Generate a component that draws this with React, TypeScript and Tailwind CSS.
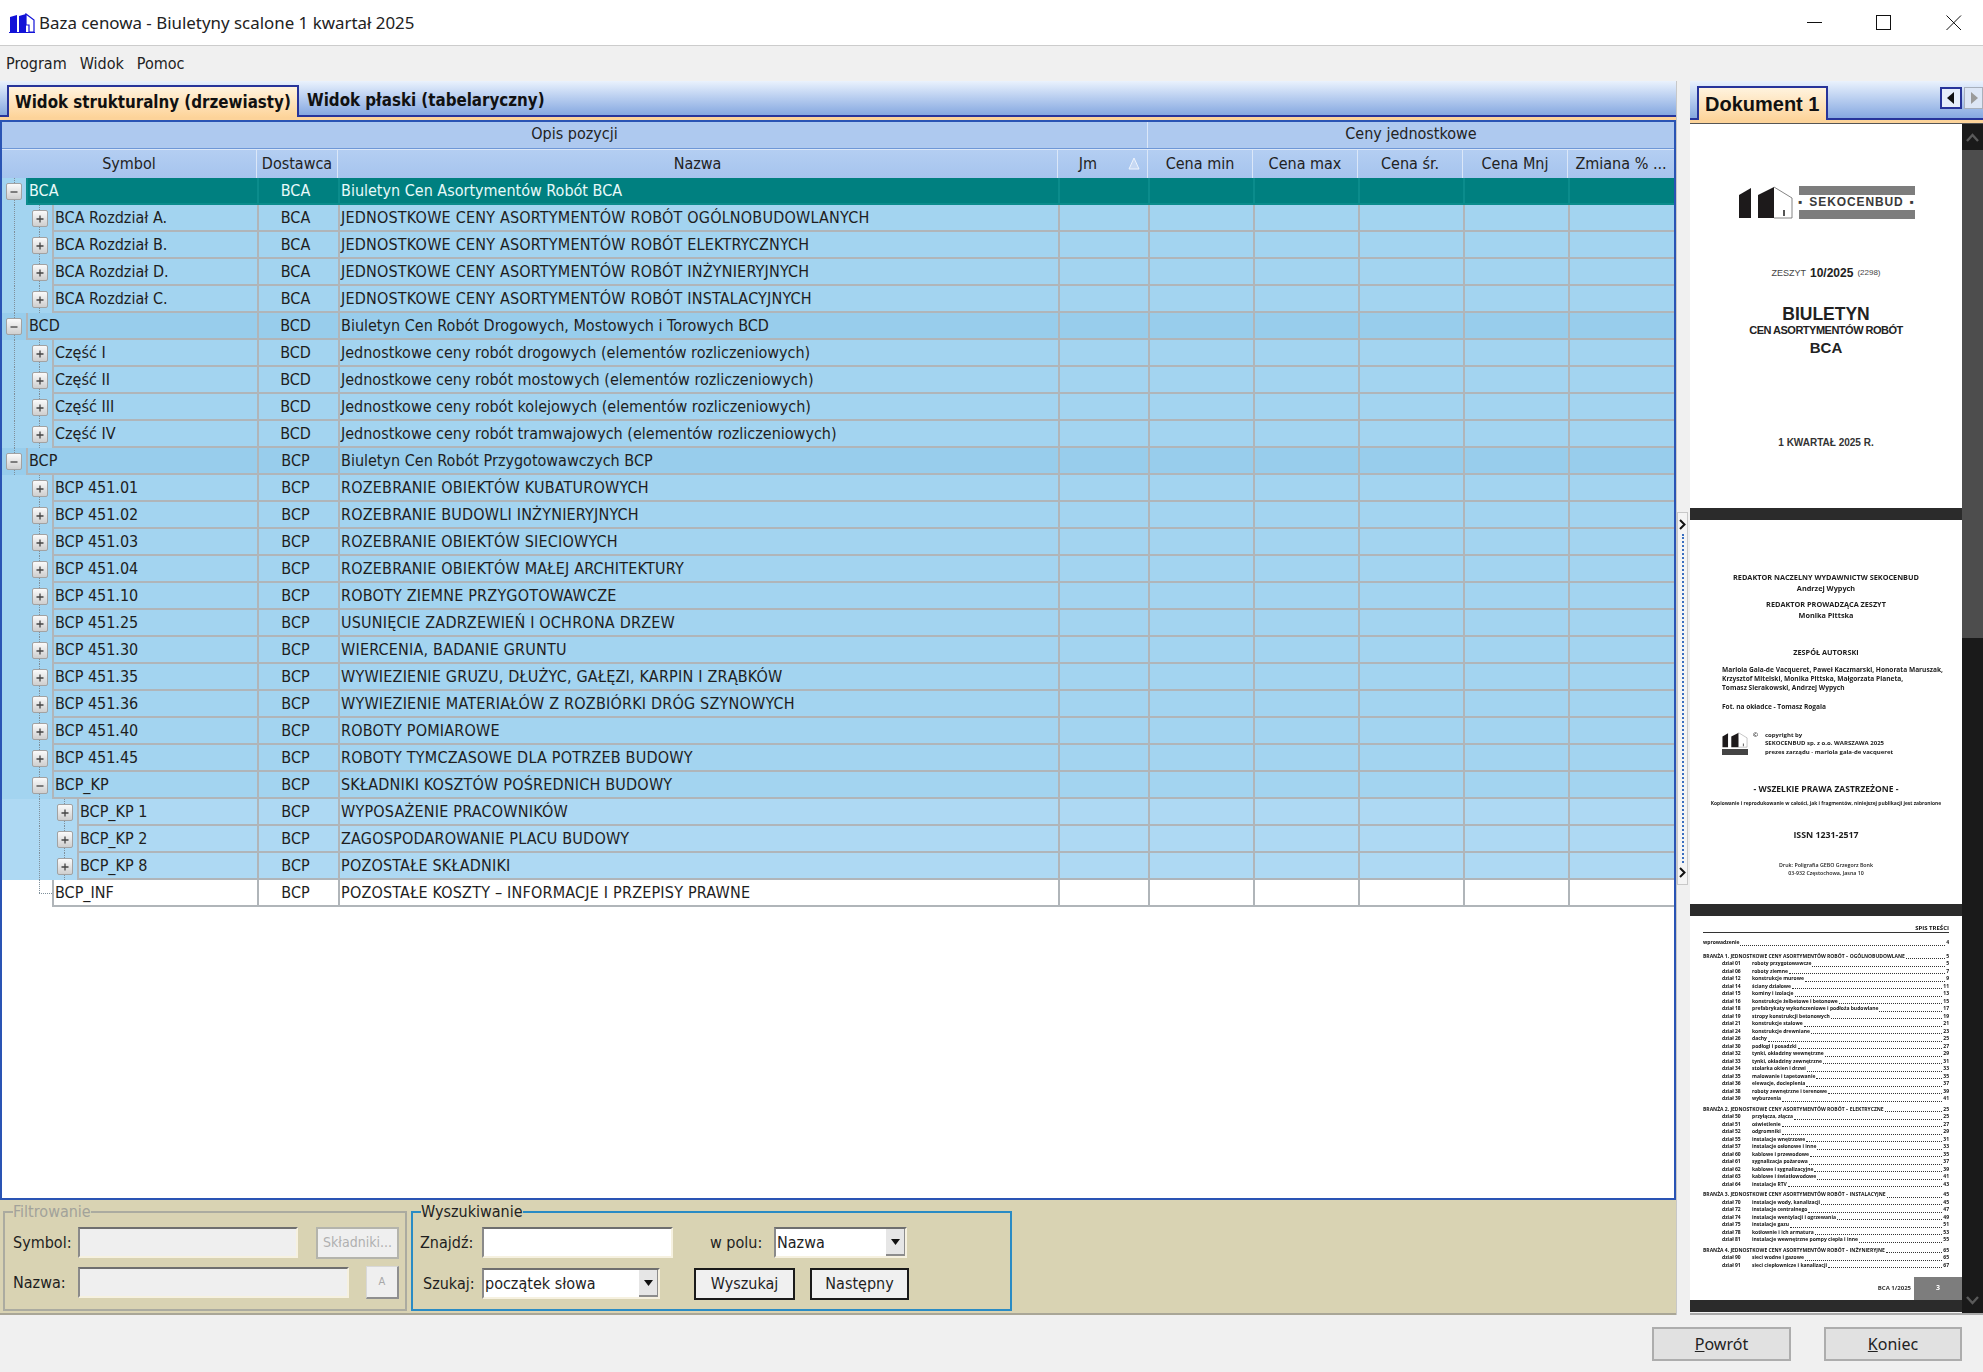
import React from "react";

type Row = { s: string; d: string; n: string; l: 0 | 1 | 2; box?: "plus" | "minus" };

const rows: Row[] = [
  { s: "BCA", d: "BCA", n: "Biuletyn Cen Asortymentów Robót BCA", l: 0, box: "minus" },
  { s: "BCA Rozdział A.", d: "BCA", n: "JEDNOSTKOWE CENY ASORTYMENTÓW ROBÓT OGÓLNOBUDOWLANYCH", l: 1, box: "plus" },
  { s: "BCA Rozdział B.", d: "BCA", n: "JEDNOSTKOWE CENY ASORTYMENTÓW ROBÓT ELEKTRYCZNYCH", l: 1, box: "plus" },
  { s: "BCA Rozdział D.", d: "BCA", n: "JEDNOSTKOWE CENY ASORTYMENTÓW ROBÓT INŻYNIERYJNYCH", l: 1, box: "plus" },
  { s: "BCA Rozdział C.", d: "BCA", n: "JEDNOSTKOWE CENY ASORTYMENTÓW ROBÓT INSTALACYJNYCH", l: 1, box: "plus" },
  { s: "BCD", d: "BCD", n: "Biuletyn Cen Robót Drogowych, Mostowych i Torowych BCD", l: 0, box: "minus" },
  { s: "Część I", d: "BCD", n: "Jednostkowe ceny robót drogowych (elementów rozliczeniowych)", l: 1, box: "plus" },
  { s: "Część II", d: "BCD", n: "Jednostkowe ceny robót mostowych (elementów rozliczeniowych)", l: 1, box: "plus" },
  { s: "Część III", d: "BCD", n: "Jednostkowe ceny robót kolejowych (elementów rozliczeniowych)", l: 1, box: "plus" },
  { s: "Część IV", d: "BCD", n: "Jednostkowe ceny robót tramwajowych (elementów rozliczeniowych)", l: 1, box: "plus" },
  { s: "BCP", d: "BCP", n: "Biuletyn Cen Robót Przygotowawczych BCP", l: 0, box: "minus" },
  { s: "BCP 451.01", d: "BCP", n: "ROZEBRANIE OBIEKTÓW KUBATUROWYCH", l: 1, box: "plus" },
  { s: "BCP 451.02", d: "BCP", n: "ROZEBRANIE BUDOWLI INŻYNIERYJNYCH", l: 1, box: "plus" },
  { s: "BCP 451.03", d: "BCP", n: "ROZEBRANIE OBIEKTÓW SIECIOWYCH", l: 1, box: "plus" },
  { s: "BCP 451.04", d: "BCP", n: "ROZEBRANIE OBIEKTÓW MAŁEJ ARCHITEKTURY", l: 1, box: "plus" },
  { s: "BCP 451.10", d: "BCP", n: "ROBOTY ZIEMNE PRZYGOTOWAWCZE", l: 1, box: "plus" },
  { s: "BCP 451.25", d: "BCP", n: "USUNIĘCIE ZADRZEWIEŃ I OCHRONA DRZEW", l: 1, box: "plus" },
  { s: "BCP 451.30", d: "BCP", n: "WIERCENIA, BADANIE GRUNTU", l: 1, box: "plus" },
  { s: "BCP 451.35", d: "BCP", n: "WYWIEZIENIE GRUZU, DŁUŻYC, GAŁĘZI, KARPIN I ZRĄBKÓW", l: 1, box: "plus" },
  { s: "BCP 451.36", d: "BCP", n: "WYWIEZIENIE MATERIAŁÓW Z ROZBIÓRKI DRÓG SZYNOWYCH", l: 1, box: "plus" },
  { s: "BCP 451.40", d: "BCP", n: "ROBOTY POMIAROWE", l: 1, box: "plus" },
  { s: "BCP 451.45", d: "BCP", n: "ROBOTY TYMCZASOWE DLA POTRZEB BUDOWY", l: 1, box: "plus" },
  { s: "BCP_KP", d: "BCP", n: "SKŁADNIKI KOSZTÓW POŚREDNICH BUDOWY", l: 1, box: "minus" },
  { s: "BCP_KP 1", d: "BCP", n: "WYPOSAŻENIE PRACOWNIKÓW", l: 2, box: "plus" },
  { s: "BCP_KP 2", d: "BCP", n: "ZAGOSPODAROWANIE PLACU BUDOWY", l: 2, box: "plus" },
  { s: "BCP_KP 8", d: "BCP", n: "POZOSTAŁE SKŁADNIKI", l: 2, box: "plus" },
  { s: "BCP_INF", d: "BCP", n: "POZOSTAŁE KOSZTY – INFORMACJE I PRZEPISY PRAWNE", l: 1 },
];

const gutterW = ["w-[24px]", "w-[50px]", "w-[75px]"];
const symbolW = ["w-[231px]", "w-[205px]", "w-[180px]"];
const levelBg = ["bg-[#98cdec]", "bg-[#a3d4f0]", "bg-[#aed9f3]"];

function TreeBox({ kind }: { kind: "plus" | "minus" }) {
  return (
    <span className="relative z-10 w-[16px] h-[17px] rounded-[2px] border border-[#a2a2a2] bg-gradient-to-b from-[#fafafa] to-[#cfcfcf] flex items-center justify-center">
      <svg width="10" height="10" viewBox="0 0 10 10">
        <path d={kind === "plus" ? "M1.5 5h7M5 1.5v7" : "M1.5 5h7"} stroke="#444" strokeWidth="1.3" fill="none" />
      </svg>
    </span>
  );
}

function TreeRow({ r, i }: { r: Row; i: number }) {
  const selected = i === 0;
  const last = i === rows.length - 1;
  const bg = last ? "bg-white" : levelBg[r.l];
  const cellBg = selected ? "bg-[#008080]" : bg;
  const gutterBg = selected ? "bg-[#a3d4f0]" : bg;
  const text = selected ? "text-[#e8fafa]" : "text-[#1e1e1e]";
  const cellBase = "h-full shrink-0 border-r-2 flex items-center whitespace-nowrap overflow-hidden";
  const line = selected ? "border-[#0b8c8c]" : "border-[#b0b5b9]";
  const caps = r.n === r.n.toUpperCase();
  return (
    <div className={`flex h-[27px] shrink-0 ${text}`}>
      <div className={`relative h-full shrink-0 flex items-center justify-end pr-[4px] ${gutterW[r.l]} ${gutterBg}`}>
        {i <= 10 && <span className="absolute left-[12px] inset-y-0 border-l border-dotted border-[#7f8f9a]" />}
        {i > 10 && r.l >= 1 && !last && <span className="absolute left-[37px] inset-y-0 border-l border-dotted border-[#7f8f9a]" />}
        {i >= 1 && i <= 4 && <span className="absolute left-[37px] inset-y-0 border-l border-dotted border-[#7f8f9a]" />}
        {i >= 6 && i <= 9 && <span className="absolute left-[37px] inset-y-0 border-l border-dotted border-[#7f8f9a]" />}
        {r.l === 2 && <span className="absolute left-[62px] inset-y-0 border-l border-dotted border-[#7f8f9a]" />}
        {last && (
          <>
            <span className="absolute left-[37px] top-0 h-[13px] border-l border-dotted border-[#7f8f9a]" />
            <span className="absolute left-[37px] top-[13px] w-[13px] border-t border-dotted border-[#7f8f9a]" />
          </>
        )}
        {r.box && <TreeBox kind={r.box} />}
      </div>
      <div className={`flex flex-1 h-full border-b-2 border-l-2 ${line} ${cellBg}`}>
        <div className={`${cellBase} ${symbolW[r.l]} ${line} pl-[1px]`}>{r.s}</div>
        <div className={`${cellBase} w-[81px] ${line} justify-center pr-[6px]`}>{r.d}</div>
        <div className={`${cellBase} w-[720px] ${line} pl-[1px] ${caps ? "tracking-[0.2px]" : ""}`}>{r.n}</div>
        <div className={`${cellBase} w-[90px] ${line}`} />
        <div className={`${cellBase} w-[105px] ${line}`} />
        <div className={`${cellBase} w-[105px] ${line}`} />
        <div className={`${cellBase} w-[105px] ${line}`} />
        <div className={`${cellBase} w-[105px] ${line}`} />
        <div className={`h-full flex-1`} />
      </div>
    </div>
  );
}

function HeadCell({ w, children, extra }: { w: string; children?: React.ReactNode; extra?: string }) {
  return (
    <div className={`h-full shrink-0 flex items-center justify-center border-r border-[#dbe7f8] whitespace-nowrap ${w} ${extra ?? ""}`}>
      {children}
    </div>
  );
}

function Insets({ w, h, disabled, children }: { w: string; h: string; disabled?: boolean; children?: React.ReactNode }) {
  return (
    <div
      className={`${w} ${h} shrink-0 border-2 border-t-[#6f6f6f] border-l-[#8a8a8a] border-r-[#f6f1e0] border-b-[#f6f1e0] flex items-center ${
        disabled ? "bg-[#efefef]" : "bg-white"
      }`}
    >
      {children}
    </div>
  );
}

function SelectBox({ w, value }: { w: string; value: string }) {
  return (
    <Insets w={w} h="h-[31px]">
      <span className="flex-1 pl-[1px] whitespace-nowrap">{value}</span>
      <span className="w-[19px] h-full bg-[#e6e6e6] border-r border-b-2 border-[#8d8d8d] flex items-center justify-center">
        <svg width="9" height="6" viewBox="0 0 9 6">
          <path d="M0 0h9L4.5 6z" fill="#111" />
        </svg>
      </span>
    </Insets>
  );
}

function TabStrip({ children, right, h }: { children: React.ReactNode; right?: React.ReactNode; h: string }) {
  return (
    <div className="shrink-0">
      <div className={`${h} flex items-end bg-gradient-to-b from-[#eaf2fd] to-[#86a8e0] border-b-2 border-[#27349a] pl-[7px] relative`}>
        {children}
        {right}
      </div>
      <div className="h-[3px] bg-[#fcd39a]" />
    </div>
  );
}

function Logo({ small }: { small?: boolean }) {
  return (
    <svg width={small ? 26 : 56} height={small ? 18 : 33} viewBox="0 0 56 33">
      <path d="M1 9 13 2v30H1z" fill="#1d1a1b" />
      <path d="M20 9 36 1v31H20z" fill="#1d1a1b" />
      <path d="M36 1 54 12v20H36" fill="#fff" stroke="#666" strokeWidth="0.8" />
      <path d="M45 24h2v6h-2z" fill="#555" />
    </svg>
  );
}

const tocGroups: { head: string; gap: string; items: [string, string][] }[] = [
  {
    head: "BRANŻA 1. JEDNOSTKOWE CENY ASORTYMENTÓW ROBÓT – OGÓLNOBUDOWLANE",
    gap: "mt-[6px]",
    items: [
      ["dział 01", "roboty przygotowawcze"], ["dział 06", "roboty ziemne"], ["dział 12", "konstrukcje murowe"],
      ["dział 14", "ściany działowe"], ["dział 15", "kominy i izolacje"], ["dział 16", "konstrukcje żelbetowe i betonowe"],
      ["dział 18", "prefabrykaty wykończeniowe i podłoża budowlane"], ["dział 19", "stropy konstrukcji betonowych"],
      ["dział 21", "konstrukcje stalowe"], ["dział 24", "konstrukcje drewniane"], ["dział 26", "dachy"],
      ["dział 30", "podłogi i posadzki"], ["dział 32", "tynki, okładziny wewnętrzne"], ["dział 33", "tynki, okładziny zewnętrzne"],
      ["dział 34", "stolarka okien i drzwi"], ["dział 35", "malowanie i tapetowanie"], ["dział 36", "elewacje, docieplenia"],
      ["dział 38", "roboty zewnętrzne i terenowe"], ["dział 39", "wyburzenia"],
    ],
  },
  {
    head: "BRANŻA 2. JEDNOSTKOWE CENY ASORTYMENTÓW ROBÓT – ELEKTRYCZNE",
    gap: "mt-[3px]",
    items: [
      ["dział 50", "przyłącza, złącza"], ["dział 51", "oświetlenie"], ["dział 52", "odgromniki"], ["dział 55", "instalacje wnętrzowe"],
      ["dział 57", "instalacje osłonowe i inne"], ["dział 60", "kablowe i przewodowe"], ["dział 61", "sygnalizacja pożarowa"],
      ["dział 62", "kablowe i sygnalizacyjne"], ["dział 63", "kablowe i światłowodowe"], ["dział 64", "instalacje RTV"],
    ],
  },
  {
    head: "BRANŻA 3. JEDNOSTKOWE CENY ASORTYMENTÓW ROBÓT – INSTALACYJNE",
    gap: "mt-[3px]",
    items: [
      ["dział 70", "instalacje wody, kanalizacji"], ["dział 72", "instalacje centralnego"], ["dział 74", "instalacje wentylacji i ogrzewania"],
      ["dział 75", "instalacje gazu"], ["dział 78", "kotłownie i ich armatura"], ["dział 81", "instalacje wewnętrzne pompy ciepła i inne"],
    ],
  },
  {
    head: "BRANŻA 4. JEDNOSTKOWE CENY ASORTYMENTÓW ROBÓT – INŻYNIERYJNE",
    gap: "mt-[3px]",
    items: [["dział 90", "sieci wodne i gazowe"], ["dział 91", "sieci ciepłownicze i kanalizacji"]],
  },
];

function TocRow({ a, b, page }: { a?: string; b: string; page: number }) {
  return (
    <div className="h-[7.5px] flex items-end leading-[7.5px] whitespace-nowrap">
      {a && <span className="w-[30px] ml-[19px] shrink-0">{a}</span>}
      <span>{b}</span>
      <span className="flex-1 border-b border-dotted border-[#333] mb-[1px] mx-[1px]" />
      <span>{page}</span>
    </div>
  );
}

function Page1() {
  return (
    <div className="h-[384px] shrink-0 bg-white flex flex-col items-center text-[#222] font-['Liberation_Sans',sans-serif] pt-[62px]">
      <div className="flex gap-[5px] items-stretch">
        <Logo />
        <div className="w-[116px] flex flex-col justify-between">
          <div className="h-[9px] bg-[#7d7d7d]" />
          <div className="flex items-center justify-between text-[#3a3a3a] font-bold text-[12px] leading-[13px] tracking-[0.9px] whitespace-nowrap">
            <span className="text-[6px]">■</span>
            <span>SEKOCENBUD</span>
            <span className="text-[6px]">■</span>
          </div>
          <div className="h-[9px] bg-[#7d7d7d]" />
        </div>
      </div>
      <div className="mt-[47px] h-[14px] leading-[14px] flex items-center gap-[4px] whitespace-nowrap">
        <span className="text-[9px] text-[#444]">ZESZYT</span>
        <span className="text-[12px] font-bold">10/2025</span>
        <span className="text-[8px] text-[#444]">(2298)</span>
      </div>
      <div className="mt-[24px] h-[20px] leading-[20px] text-[17.5px] font-bold">BIULETYN</div>
      <div className="h-[12px] leading-[12px] text-[11px] font-bold tracking-[-0.5px] whitespace-nowrap">CEN ASORTYMENTÓW ROBÓT</div>
      <div className="mt-[4px] h-[16px] leading-[16px] text-[15px] font-bold">BCA</div>
      <div className="mt-[81px] h-[12px] leading-[12px] text-[10px] font-bold text-[#333] whitespace-nowrap">1 KWARTAŁ 2025 R.</div>
    </div>
  );
}

function Page2() {
  return (
    <div className="h-[384px] shrink-0 bg-white flex flex-col items-center text-[#1c1c1c] font-['Open_Sans',sans-serif] font-bold text-[7.3px] whitespace-nowrap pt-[52px] blur-[0.35px]">
      <div className="h-[10px] leading-[10px]">REDAKTOR NACZELNY WYDAWNICTW SEKOCENBUD</div>
      <div className="mt-[1px] h-[10px] leading-[10px]">Andrzej Wypych</div>
      <div className="mt-[6px] h-[10px] leading-[10px]">REDAKTOR PROWADZĄCA ZESZYT</div>
      <div className="mt-[1px] h-[10px] leading-[10px]">Monika Pittska</div>
      <div className="mt-[27px] h-[10px] leading-[10px]">ZESPÓŁ AUTORSKI</div>
      <div className="mt-[8px] self-start ml-[32px] text-[6.6px] leading-[9px]">
        <div className="h-[9px]">Mariola Gala-de Vacqueret, Paweł Kaczmarski, Honorata Maruszak,</div>
        <div className="h-[9px]">Krzysztof Mitelski, Monika Pittska, Małgorzata Planeta,</div>
        <div className="h-[9px]">Tomasz Sierakowski, Andrzej Wypych</div>
        <div className="mt-[10px] h-[10px] leading-[10px]">Fot. na okładce - Tomasz Rogala</div>
        <div className="mt-[19px] flex gap-[5px] items-start">
          <div className="w-[26px] h-[25px] flex flex-col items-start">
            <Logo small />
            <div className="w-[26px] h-[6px] bg-[#444]" />
          </div>
          <span className="text-[6px] leading-[9px]">©</span>
          <div className="ml-[2px] leading-[8.4px] text-[6px]">
            <div>copyright by</div>
            <div>SEKOCENBUD sp. z o.o. WARSZAWA 2025</div>
            <div>prezes zarządu - mariola gala-de vacqueret</div>
          </div>
        </div>
      </div>
      <div className="mt-[28px] h-[10px] leading-[10px] text-[8.5px]">- WSZELKIE PRAWA ZASTRZEŻONE -</div>
      <div className="mt-[5px] h-[8px] leading-[8px] text-[4.9px]">Kopiowanie i reprodukowanie w całości, jak i fragmentów, niniejszej publikacji jest zabronione</div>
      <div className="mt-[23px] h-[10px] leading-[10px] text-[8.8px]">ISSN 1231-2517</div>
      <div className="mt-[21px] h-[8px] leading-[8px] text-[5.3px] font-semibold">Druk: Poligrafia GEBO Grzegorz Bonk</div>
      <div className="h-[8px] leading-[8px] text-[5.3px] font-semibold">03-932 Częstochowa, Jasna 10</div>
    </div>
  );
}

function Page3() {
  return (
    <div className="h-[384px] shrink-0 bg-white flex flex-col text-[#111] font-['Open_Sans',sans-serif] font-bold text-[5px] overflow-hidden blur-[0.3px]">
      <div className="pl-[13px] pr-[13px] pt-[8px]">
        <div className="text-right text-[6px] font-bold leading-[8px] border-b border-[#333]">SPIS TREŚCI</div>
        <div className="mt-[6px]">
          <TocRow b="wprowadzenie" page={4} />
        </div>
        {tocGroups.map((g, gi) => (
          <div key={gi} className={g.gap}>
            <TocRow b={g.head} page={5 + gi * 20} />
            {g.items.map((it, k) => (
              <TocRow key={k} a={it[0]} b={it[1]} page={5 + gi * 20 + k * 2} />
            ))}
          </div>
        ))}
      </div>
      <div className="mt-auto flex justify-end items-center">
        <span className="mr-[3px] text-[6px] font-bold text-[#333]">BCA 1/2025</span>
        <span className="w-[48px] h-[23px] bg-[#7d7d7d] flex items-center justify-center text-white text-[7px] font-bold">3</span>
      </div>
    </div>
  );
}

function Chevron({ dir }: { dir: "up" | "down" }) {
  return (
    <svg width="13" height="9" viewBox="0 0 13 9">
      <path d={dir === "up" ? "M1 8 6.5 2 12 8" : "M1 1l5.5 6L12 1"} stroke="#5a5a5a" strokeWidth="2.4" fill="none" />
    </svg>
  );
}

function GripArrow() {
  return (
    <svg width="7" height="11" viewBox="0 0 7 11">
      <path d="M1 1l4.5 4.5L1 10" stroke="#111" strokeWidth="2" fill="none" />
    </svg>
  );
}

export default function App() {
  return (
    <div className="w-[1983px] h-[1372px] flex flex-col overflow-hidden bg-[#f0f0f0] text-[#1e1e1e] text-[16px] font-['DejaVu_Sans_Condensed','Liberation_Sans',sans-serif]">
      {/* title bar */}
      <div className="h-[46px] shrink-0 bg-white border-b border-[#cccccc] flex items-center pl-[9px]">
        <svg width="27" height="20" viewBox="0 0 27 20" className="mr-[3px]">
          <path d="M1 4 8 2v17H1z" fill="#1212d8" />
          <path d="M10 3l7-2v18h-7z" fill="#1212d8" />
          <path d="M17 1l8 6v12h-5v-7h-3z" fill="#fff" stroke="#1212d8" strokeWidth="1.2" />
          <path d="M0 19.5h26" stroke="#1212d8" />
        </svg>
        <span className="font-['Noto_Sans',sans-serif] text-[16.9px] text-[#222] whitespace-nowrap">Baza cenowa - Biuletyny scalone 1 kwartał 2025</span>
        <div className="ml-auto flex items-center pr-[21px]">
          <svg width="16" height="16" viewBox="0 0 16 16" className="mr-[53px]">
            <path d="M0 7.5h15" stroke="#111" strokeWidth="1" />
          </svg>
          <svg width="16" height="16" viewBox="0 0 16 16" className="mr-[54px]">
            <rect x="0.5" y="0.5" width="14" height="14" fill="none" stroke="#111" />
          </svg>
          <svg width="16" height="16" viewBox="0 0 16 16">
            <path d="M0.5 0.5l14.5 14.5M15 0.5 0.5 15" stroke="#111" />
          </svg>
        </div>
      </div>
      {/* menu */}
      <div className="h-[35px] shrink-0 flex items-center pl-[6px] gap-[13px] text-[#222]">
        <span>Program</span>
        <span>Widok</span>
        <span>Pomoc</span>
      </div>
      {/* main */}
      <div className="flex flex-1 min-h-0">
        <div className="w-[1677px] shrink-0 flex flex-col border-r border-[#c8c8c8]">
          <TabStrip h="h-[36px]">
            <div className="h-[32px] w-[292px] -mb-[2px] pl-[6px] pt-[2px] flex items-center border-2 border-b-0 border-[#27349a] bg-gradient-to-b from-[#fff3de] to-[#fdd49a] font-bold text-[16.8px] text-[#111] whitespace-nowrap">
              Widok strukturalny (drzewiasty)
            </div>
            <div className="h-[30px] pl-[8px] pt-[2px] flex items-center font-bold text-[16.8px] text-[#111] whitespace-nowrap">Widok płaski (tabelaryczny)</div>
          </TabStrip>
          <div className="flex-1 min-h-0 flex flex-col bg-white border-x-2 border-b-2 border-[#2a54b4] border-t-2 border-t-[#2a54b4]">
            <div className="h-[27px] shrink-0 flex bg-[#aec9ef] border-b border-[#6f97d6] text-[#222]">
              <HeadCell w="w-[1146px]" extra="pb-[2px]">Opis pozycji</HeadCell>
              <div className="flex-1 h-full flex items-center justify-center pb-[2px]">Ceny jednostkowe</div>
            </div>
            <div className="h-[29px] shrink-0 flex bg-gradient-to-b from-[#b4cef2] to-[#a6c4ee] border-t border-[#dbe7f8] text-[#222]">
              <HeadCell w="w-[255px]">Symbol</HeadCell>
              <HeadCell w="w-[81px]">Dostawca</HeadCell>
              <HeadCell w="w-[720px]">Nazwa</HeadCell>
              <HeadCell w="w-[90px]" extra="relative pr-[29px]">
                Jm
                <svg width="12" height="13" viewBox="0 0 12 13" className="absolute right-[7px] top-[7px]">
                  <path d="M6 1 11 12H1z" fill="#c6d8f3" stroke="#eef4fd" strokeWidth="1" />
                </svg>
              </HeadCell>
              <HeadCell w="w-[105px]">Cena min</HeadCell>
              <HeadCell w="w-[105px]">Cena max</HeadCell>
              <HeadCell w="w-[105px]">Cena śr.</HeadCell>
              <HeadCell w="w-[105px]">Cena Mnj</HeadCell>
              <div className="flex-1 h-full flex items-center justify-center whitespace-nowrap">Zmiana % ...</div>
            </div>
            {rows.map((r, i) => (
              <TreeRow key={i} r={r} i={i} />
            ))}
          </div>
          {/* bottom filter panel */}
          <div className="h-[115px] shrink-0 bg-[#d9d3b3] border-b-2 border-[#a9a697] pt-[3px] pl-[3px] flex gap-[4px]">
            <fieldset className="w-[404px] h-[108px] border-2 border-[#ababa0] pl-[8px] pt-[6px]">
              <legend className="text-[#a2a29a] leading-[18px]">Filtrowanie</legend>
              <div className="flex items-center h-[31px]">
                <span className="w-[65px] shrink-0">Symbol:</span>
                <Insets w="w-[220px]" h="h-[31px]" disabled />
                <div className="ml-[18px] w-[83px] h-[32px] bg-[#efefef] border-2 border-[#b4b4ac] flex items-center justify-center text-[#b0b0b0] text-[14px]">Składniki...</div>
              </div>
              <div className="flex items-center h-[31px] mt-[9px]">
                <span className="w-[65px] shrink-0">Nazwa:</span>
                <Insets w="w-[271px]" h="h-[31px]" disabled />
                <div className="ml-[17px] w-[33px] h-[33px] bg-[#efefef] border border-[#d8d8d8] border-b-2 border-b-[#8f8f8f] border-r-2 border-r-[#8f8f8f] flex items-center justify-center text-[#a8a8a8] text-[11px]">A</div>
              </div>
            </fieldset>
            <fieldset className="w-[601px] h-[108px] border-2 border-[#2a8bc4] pl-[7px] pt-[6px]">
              <legend className="ml-[1px] text-[#222] leading-[18px]">Wyszukiwanie</legend>
              <div className="flex items-center h-[31px]">
                <span className="w-[62px] shrink-0">Znajdź:</span>
                <Insets w="w-[191px]" h="h-[31px]" />
                <span className="ml-[37px] w-[64px] shrink-0">w polu:</span>
                <SelectBox w="w-[133px]" value="Nazwa" />
              </div>
              <div className="flex items-center h-[31px] mt-[10px]">
                <span className="w-[62px] shrink-0 pl-[3px]">Szukaj:</span>
                <SelectBox w="w-[178px]" value="początek słowa" />
                <div className="ml-[34px] w-[101px] h-[32px] bg-[#f0f0f0] border-2 border-[#1a1a1a] flex items-center justify-center">Wyszukaj</div>
                <div className="ml-[15px] w-[99px] h-[32px] bg-[#f0f0f0] border-2 border-[#1a1a1a] flex items-center justify-center">Następny</div>
              </div>
            </fieldset>
          </div>
        </div>
        {/* splitter */}
        <div className="w-[13px] shrink-0 flex flex-col justify-start pt-[431px]">
          <div className="w-[11px] h-[373px] bg-[#f4f4f4] border border-[#c8c8c8] flex flex-col items-center justify-between py-[6px]">
            <GripArrow />
            <span className="flex-1 border-l-2 border-dotted border-[#3a6fc0] my-[4px]" />
            <GripArrow />
          </div>
        </div>
        {/* right */}
        <div className="flex-1 min-w-0 flex flex-col">
          <TabStrip
            h="h-[39px]"
            right={
              <div className="absolute right-0 top-[6px] flex items-center gap-[2px]">
                <div className="w-[22px] h-[22px] border-2 border-[#27349a] bg-[#e6eefa] flex items-center justify-center">
                  <svg width="8" height="12" viewBox="0 0 8 12"><path d="M7 0v12L0 6z" fill="#111" /></svg>
                </div>
                <div className="w-[19px] h-[22px] bg-[#dde6f5] border border-[#a8b0bc] flex items-center justify-center">
                  <svg width="8" height="12" viewBox="0 0 8 12"><path d="M1 0v12l7-6z" fill="#9a9a9a" /></svg>
                </div>
              </div>
            }
          >
            <div className="h-[34px] w-[131px] -mb-[2px] pl-[6px] flex items-center border-2 border-b-0 border-[#27349a] bg-gradient-to-b from-[#fff3de] to-[#fdd49a] font-bold text-[20px] text-[#111] whitespace-nowrap font-['Liberation_Sans',sans-serif]">
              Dokument 1
            </div>
          </TabStrip>
          <div className="h-[1px] shrink-0 bg-[#555]" />
          <div className="flex flex-1 min-h-0 border-b-2 border-[#a9a9a9]">
            <div className="w-[272px] shrink-0 flex flex-col overflow-hidden">
              <Page1 />
              <div className="h-[12px] shrink-0 bg-[#2b2b2b]" />
              <Page2 />
              <div className="h-[12px] shrink-0 bg-[#2b2b2b]" />
              <Page3 />
              <div className="h-[12px] shrink-0 bg-[#2b2b2b]" />
            </div>
            <div className="flex-1 bg-[#1a1a1a] flex flex-col">
              <div className="h-[26px] shrink-0 flex items-center justify-center"><Chevron dir="up" /></div>
              <div className="h-[488px] shrink-0 bg-[#4d4d4d]" />
              <div className="flex-1" />
              <div className="h-[26px] shrink-0 flex items-center justify-center"><Chevron dir="down" /></div>
            </div>
          </div>
        </div>
      </div>
      {/* footer */}
      <div className="h-[57px] shrink-0 flex items-center justify-end gap-[33px] pr-[21px] pt-[1px] font-['Noto_Sans',sans-serif] text-[16px] text-[#222]">
        <div className="w-[139px] h-[34px] bg-[#e1e1e1] border-2 border-[#adadad] flex items-center justify-center"><span><span className="underline">P</span>owrót</span></div>
        <div className="w-[138px] h-[34px] bg-[#e1e1e1] border-2 border-[#adadad] flex items-center justify-center"><span><span className="underline">K</span>oniec</span></div>
      </div>
    </div>
  );
}
